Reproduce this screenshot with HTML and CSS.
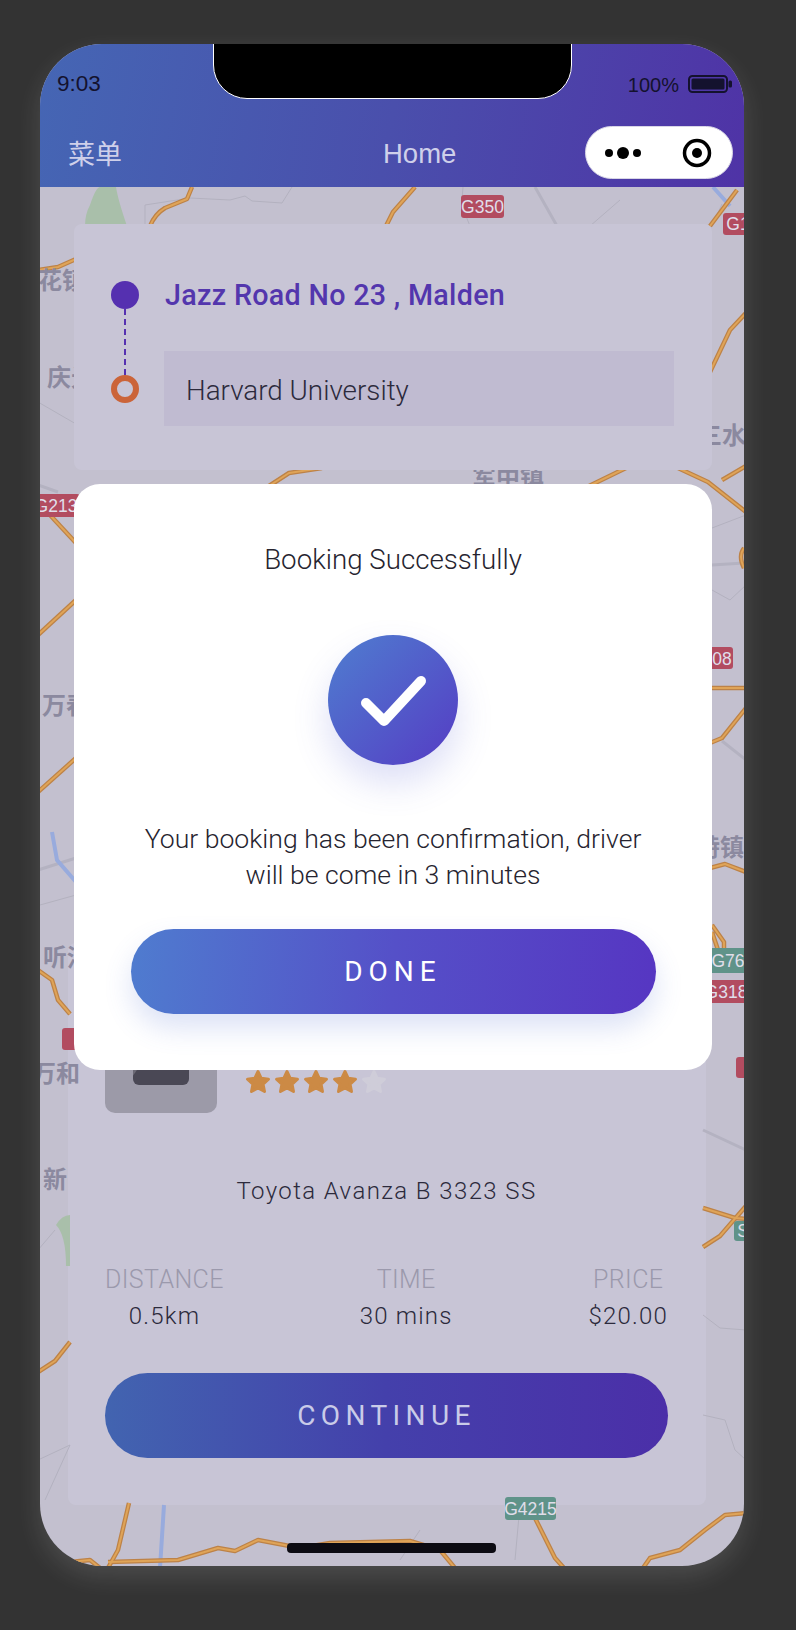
FILE: index.html
```html
<!DOCTYPE html>
<html lang="en">
<head>
    <meta charset="UTF-8">
    <meta name="viewport" content="width=device-width, initial-scale=1.0">
    <title>Booking Successfully</title>
    <link rel="stylesheet" href="styles.css">
</head>
<body>
    <div class="phone">
        <!-- map background, drawn in page coordinates -->
        <svg class="map" viewBox="40 44 704 1522" aria-hidden="true">
            <defs>
                <g id="roads">
                    <path d="M192 187L187 199L165 208Q155 214 150 226"/>
                    <path d="M415 187L393 212L386 226"/>
                    <path d="M737 190L710 226"/>
                    <path d="M38 270L58 267L76 259"/>
                    <path d="M50 515L76 543"/>
                    <path d="M38 635L76 600"/>
                    <path d="M38 792L76 758"/>
                    <path d="M38 970L52 980L58 1000L70 1014"/>
                    <path d="M38 1372L55 1361L70 1342"/>
                    <path d="M269 486L289 473L322 468"/>
                    <path d="M589 486L626 468"/>
                    <path d="M678 468L708 482L746 512"/>
                    <path d="M722 480L746 466"/>
                    <path d="M746 313L730 330L710 372"/>
                    <path d="M710 688H746"/>
                    <path d="M710 743L722 738L746 708"/>
                    <path d="M710 868L725 864L746 872"/>
                    <path d="M712 925L724 942V950M712 932L718 950"/>
                    <path d="M744 548Q738 556 744 568"/>
                    <path d="M703 1208L735 1218L746 1219"/>
                    <path d="M703 1247L720 1236L746 1206"/>
                    <path d="M129 1503L118 1550L108 1568"/>
                    <path d="M70 1562L90 1560L100 1568M108 1562L178 1560L218 1548L235 1551L258 1540L300 1548L330 1543L410 1541L440 1550L455 1568"/>
                    <path d="M535 1518L555 1558L564 1568"/>
                    <path d="M643 1568L650 1558L680 1550L705 1530L725 1515L746 1513"/>
                </g>
            </defs>
            <path class="park" d="M90 205Q96 187 100 187H116Q118 200 127 226H85Q85 214 90 205Z"/>
            <path class="park" d="M56 1225Q62 1215 70 1215V1266H66Q66 1235 56 1225Z"/>
            <path class="thin" d="M145 226V205L190 198L230 200L245 196L252 201L282 203L292 187"/>
            <path class="thin" d="M463 187Q460 205 470 226M590 226L620 200M712 226L722 204"/>
            <path class="thin" d="M38 402L76 424M38 1250L55 1230M38 1460L70 1445L45 1500"/>
            <path class="thin" d="M40 905L76 895M703 1315L720 1328L746 1330M703 1415L725 1420L735 1450L746 1460"/>
            <path class="thin" d="M712 528L746 515M712 590L730 600L746 585M520 1505L515 1560M420 1530L400 1560"/>
            <path class="rail" d="M535 187L557 226M38 485L58 492M38 870L76 858M712 565L746 563M722 741L746 760M703 1130L746 1150"/>
            <path class="river" d="M713 187L730 206M52 832L57 860L76 882M164 1505L160 1568"/>
            <use href="#roads" class="road-edge"/>
            <use href="#roads" class="road-core"/>

            <text class="place" x="38" y="289">花镇</text>
            <text class="place" x="47" y="386">庆光</text>
            <text class="place" x="42" y="714">万春</text>
            <text class="place" x="43" y="966">听河</text>
            <text class="place" x="32" y="1082">万和</text>
            <text class="place" x="43" y="1188">新</text>
            <text class="place" x="698" y="444">三水</text>
            <text class="place" x="696" y="856">特镇</text>
            <text class="place" x="472" y="486">军中镇</text>

            <rect class="sign-red" x="461" y="195" width="43" height="23" rx="3"/>
            <text class="sign-text" x="482.5" y="212.5">G350</text>
            <rect class="sign-red" x="723" y="213" width="26" height="22" rx="3"/>
            <text class="sign-text" x="738" y="230">G1</text>
            <rect class="sign-red" x="30" y="494" width="50" height="23" rx="3"/>
            <text class="sign-text" x="56" y="511.5">G213</text>
            <rect class="sign-red" x="706" y="647" width="27" height="22" rx="3"/>
            <text class="sign-text" x="722" y="664.5">08</text>
            <rect class="sign-green" x="706" y="948" width="42" height="25" rx="3"/>
            <text class="sign-text" x="728" y="966.5">G76</text>
            <rect class="sign-red" x="706" y="980" width="42" height="23" rx="3"/>
            <text class="sign-text" x="726" y="997.5">G318</text>
            <rect class="sign-red" x="62" y="1028" width="16" height="22" rx="3"/>
            <rect class="sign-red" x="736" y="1057" width="16" height="21" rx="3"/>
            <rect class="sign-green" x="734" y="1221" width="16" height="20" rx="3"/>
            <text class="sign-text" x="743" y="1237">S</text>
            <rect class="sign-green" x="505" y="1497" width="51" height="23" rx="3"/>
            <text class="sign-text" x="530.5" y="1514.5">G4215</text>
        </svg>

        <header class="top">
            <div class="status">
                <span class="time">9:03</span>
                <span class="battery">
                    <span>100%</span>
                    <svg class="battery-icon" width="44" height="18" viewBox="0 0 44 18">
                        <rect x="1" y="1" width="38" height="16" rx="3.5" fill="none" stroke="#14122e" stroke-width="2"/>
                        <rect x="3.5" y="3.5" width="33" height="11" rx="1.5" fill="#14122e"/>
                        <rect x="40.5" y="5.5" width="3.5" height="7" rx="1.5" fill="#14122e"/>
                    </svg>
                </span>
            </div>
            <nav class="nav">
                <span class="nav-menu">菜单</span>
                <span class="nav-title">Home</span>
                <div class="capsule">
                    <svg width="40" height="14" viewBox="0 0 40 14">
                        <circle cx="4" cy="7" r="4"/>
                        <circle cx="18" cy="7" r="6"/>
                        <circle cx="32" cy="7" r="4"/>
                    </svg>
                    <svg width="30" height="30" viewBox="0 0 30 30">
                        <circle cx="15" cy="15" r="12.5" fill="none" stroke="#000" stroke-width="3.5"/>
                        <circle cx="15" cy="15" r="5"/>
                    </svg>
                </div>
            </nav>
        </header>
        <div class="notch"></div>

        <section class="route">
            <div class="stop stop-from">
                <span class="dot"></span>
                <span class="stop-name">Jazz Road No 23 , Malden</span>
            </div>
            <div class="stop stop-to">
                <span class="ring"></span>
                <div class="stop-input">Harvard University</div>
            </div>
        </section>

        <section class="trip">
            <div class="driver">
                <div class="thumb"><div class="thumb-inner"></div></div>
                <div class="stars">
                    <svg viewBox="0 0 24 24"><path d="M12 3l2.8 5.8 6.2.8-4.6 4.3 1.2 6.3L12 17.2l-5.6 3 1.2-6.3L3 9.6l6.2-.8z"/></svg>
                    <svg viewBox="0 0 24 24"><path d="M12 3l2.8 5.8 6.2.8-4.6 4.3 1.2 6.3L12 17.2l-5.6 3 1.2-6.3L3 9.6l6.2-.8z"/></svg>
                    <svg viewBox="0 0 24 24"><path d="M12 3l2.8 5.8 6.2.8-4.6 4.3 1.2 6.3L12 17.2l-5.6 3 1.2-6.3L3 9.6l6.2-.8z"/></svg>
                    <svg viewBox="0 0 24 24"><path d="M12 3l2.8 5.8 6.2.8-4.6 4.3 1.2 6.3L12 17.2l-5.6 3 1.2-6.3L3 9.6l6.2-.8z"/></svg>
                    <svg class="star-off" viewBox="0 0 24 24"><path d="M12 3l2.8 5.8 6.2.8-4.6 4.3 1.2 6.3L12 17.2l-5.6 3 1.2-6.3L3 9.6l6.2-.8z"/></svg>
                </div>
            </div>
            <p class="car">Toyota Avanza B 3323 SS</p>
            <div class="stats">
                <div class="stat"><span class="stat-label">DISTANCE</span><span class="stat-value">0.5km</span></div>
                <div class="stat"><span class="stat-label">TIME</span><span class="stat-value">30 mins</span></div>
                <div class="stat"><span class="stat-label">PRICE</span><span class="stat-value">$20.00</span></div>
            </div>
            <div class="btn-continue">CONTINUE</div>
        </section>

        <div class="home-bar"></div>

        <section class="modal">
            <h2 class="modal-title">Booking Successfully</h2>
            <div class="check">
                <svg width="130" height="130" viewBox="0 0 130 130">
                    <path d="M38 68L56 86L93 46" fill="none" stroke="#fff" stroke-width="10" stroke-linecap="round" stroke-linejoin="round"/>
                </svg>
            </div>
            <p class="modal-text">Your booking has been confirmation, driver will be come in 3 minutes</p>
            <div class="btn-done">DONE</div>
        </section>
    </div>
</body>
</html>
```

FILE: styles.css
```css
* {
    box-sizing: border-box;
}
body {
    margin: 0;
    height: 1630px;
    padding: 44px 52px 0 40px;
    background: #333;
    font-family: Roboto, "Noto Sans CJK SC", sans-serif;
    overflow: hidden;
}
.phone {
    position: relative;
    width: 704px;
    height: 1522px;
    border-radius: 62px;
    overflow: hidden;
    background: #c3c0cf;
    box-shadow: 0 10px 26px rgba(255, 255, 255, 0.13);
}

/* map */
.map {
    position: absolute;
    left: 0;
    top: 0;
    width: 704px;
    height: 1522px;
}
.park { fill: #a9bfaa; }
.thin { fill: none; stroke: #b3b1bf; stroke-width: 1; }
.rail { fill: none; stroke: #b4b2c1; stroke-width: 3; }
.river { fill: none; stroke: #98abdd; stroke-width: 4; }
.road-edge { fill: none; stroke: #bd8247; stroke-width: 4.5; stroke-linejoin: round; }
.road-core { fill: none; stroke: #dfa458; stroke-width: 2; stroke-linejoin: round; }
.place {
    font-size: 24px;
    font-weight: 700;
    fill: #8b899f;
    font-family: "Noto Sans CJK SC", sans-serif;
}
.sign-red { fill: #b24c60; }
.sign-green { fill: #5f9389; }
.sign-text {
    font-size: 17.5px;
    font-family: "Liberation Sans", sans-serif;
    fill: #e0deea;
    text-anchor: middle;
}

/* header */
.top {
    position: relative;
    height: 143px;
    background: linear-gradient(100deg, #4566b4 0%, #4a4fac 50%, #4f33a6 100%);
}
.status {
    display: flex;
    justify-content: space-between;
    padding: 27px 12px 0 17px;
    height: 82px;
    color: #14122e;
    font-family: "Liberation Sans", sans-serif;
}
.time {
    font-size: 22.5px;
}
.battery {
    display: flex;
    gap: 9px;
    align-items: flex-start;
    padding-top: 3px;
    font-size: 20px;
}
.battery-icon {
    margin-top: 1px;
}
.nav {
    display: flex;
    align-items: center;
    padding: 0 11px 0 28px;
    height: 53px;
    color: #cfd0ea;
}
.nav-menu {
    font-size: 27px;
}
.nav-title {
    padding-top: 2px;
    font-size: 27.5px;
    margin-left: 261px;
    font-family: "Liberation Sans", sans-serif;
}
.capsule {
    display: flex;
    align-items: center;
    justify-content: space-between;
    margin-left: auto;
    width: 148px;
    height: 53px;
    padding: 0 20px 0 19px;
    border-radius: 27px;
    background: #fff;
    border: 1px solid #d8d6e6;
}
.notch {
    position: absolute;
    left: 173px;
    top: -2px;
    width: 359px;
    height: 57px;
    background: #000;
    border: 1px solid #fff;
    border-radius: 0 0 34px 34px;
}

/* route card */
.route {
    position: relative;
    width: 638px;
    height: 246px;
    margin: 37px 0 0 34px;
    padding: 51px 37px 0;
    border-radius: 8px;
    background: #c8c5d6;
}
.stop {
    display: flex;
    align-items: center;
    gap: 25px;
}
.stop-from {
    height: 40px;
    margin-bottom: 36px;
}
.dot {
    position: relative;
    flex: none;
    width: 28px;
    height: 28px;
    border-radius: 50%;
    background: #5530b0;
}
.dot::after {
    content: "";
    position: absolute;
    left: 13px;
    top: 28px;
    height: 66px;
    border-left: 2px dashed #5530b0;
}
.stop-name {
    margin-left: 1px;
    font-size: 28.7px;
    font-weight: 500;
    letter-spacing: 0.3px;
    color: #5336ad;
}
.ring {
    flex: none;
    width: 28px;
    height: 28px;
    border-radius: 50%;
    border: 6px solid #cb6439;
}
.stop-input {
    display: flex;
    align-items: center;
    width: 510px;
    height: 75px;
    padding: 3px 0 0 22px;
    background: #c0bbd1;
    color: #2c2a3c;
    font-size: 27.8px;
    font-weight: 300;
}

/* trip card, its top part sits behind the modal */
.trip {
    width: 638px;
    height: 562px;
    margin: 473px 0 0 28px;
    padding: 58px 38px 0 37px;
    border-radius: 8px;
    background: #c8c5d6;
}
.driver {
    display: flex;
    gap: 27px;
    align-items: flex-end;
}
.thumb {
    width: 112px;
    height: 112px;
    border-radius: 10px;
    background: #9c9aa8;
}
.thumb-inner {
    width: 56px;
    height: 84px;
    margin-left: 28px;
    border-radius: 6px;
    background: linear-gradient(125deg, #6c6a76 45%, #4a4855 46%);
}
.stars {
    display: flex;
    gap: 1px;
    margin-bottom: 17px;
}
.stars svg {
    width: 28px;
    height: 28px;
    fill: #cc8a45;
    stroke: #cc8a45;
    stroke-width: 2.5;
    stroke-linejoin: round;
}
.stars .star-off {
    fill: #cfcdd9;
    stroke: #cfcdd9;
}
.car {
    margin: 63px 0 0;
    text-align: center;
    color: #2c2a3c;
    font-size: 24px;
    font-weight: 300;
    line-height: 30px;
    letter-spacing: 1.4px;
}
.stats {
    display: flex;
    justify-content: space-between;
    margin-top: 60px;
}
.stat {
    display: flex;
    flex-direction: column;
    align-items: center;
    gap: 8px;
    font-weight: 300;
    line-height: 28px;
}
.stat-label {
    color: #9b99ac;
    font-size: 25px;
    letter-spacing: 0.4px;
}
.stat-value {
    color: #2c2a3c;
    font-size: 24px;
    letter-spacing: 1.2px;
}
.btn-continue {
    display: flex;
    align-items: center;
    justify-content: center;
    height: 85px;
    margin-top: 43px;
    border-radius: 43px;
    background: linear-gradient(90deg, #4264b0 0%, #4440ab 50%, #4b2fa8 100%);
    color: #c9cbe8;
    font-size: 28px;
    letter-spacing: 5.4px;
}
.home-bar {
    position: absolute;
    left: 247px;
    top: 1499px;
    width: 209px;
    height: 10px;
    border-radius: 4px;
    background: #0c0b12;
}

/* modal */
.modal {
    position: absolute;
    left: 34px;
    top: 440px;
    width: 638px;
    height: 586px;
    padding: 58px 56px 0;
    border-radius: 26px;
    background: #fff;
    text-align: center;
    display: flex;
    flex-direction: column;
    align-items: center;
}
.modal-title {
    margin: 0;
    color: #26242f;
    font-size: 27.7px;
    font-weight: 300;
    line-height: 36px;
}
.check {
    width: 130px;
    height: 130px;
    margin-top: 57px;
    border-radius: 50%;
    background: linear-gradient(135deg, #4f7ed0 0%, #553cc4 100%);
    box-shadow: 0 18px 36px rgba(80, 90, 210, 0.2);
}
.modal-text {
    margin: 56px 0 0;
    width: 510px;
    color: #26242f;
    font-size: 26.6px;
    font-weight: 300;
    line-height: 36px;
}
.btn-done {
    display: flex;
    align-items: center;
    justify-content: center;
    width: 525px;
    height: 85px;
    margin-top: 36px;
    border-radius: 43px;
    background: linear-gradient(95deg, #4f7ccf 0%, #5550c8 50%, #5636c2 100%);
    box-shadow: 0 14px 28px rgba(80, 110, 210, 0.2);
    color: #fff;
    font-size: 28px;
    letter-spacing: 6px;
}
```
